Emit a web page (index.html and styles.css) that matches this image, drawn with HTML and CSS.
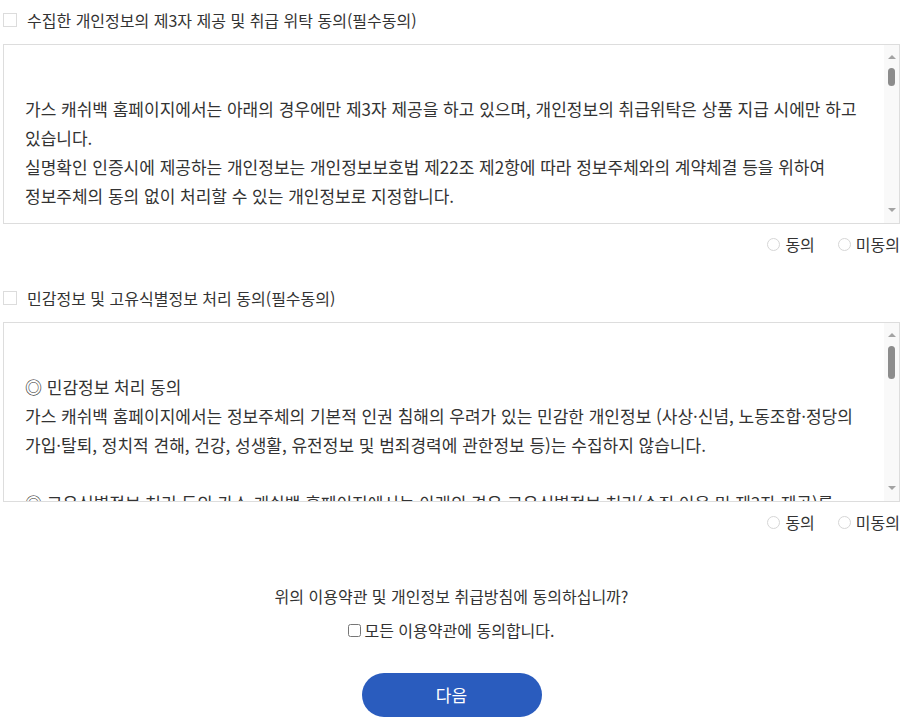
FILE: index.html
```html
<!DOCTYPE html>
<html lang="ko">
<head>
    <meta charset="UTF-8">
    <meta name="viewport" content="width=device-width, initial-scale=1.0">
    <title>약관 동의</title>
    <link rel="stylesheet" href="styles.css">
</head>
<body>
<div class="agree-wrap">

    <div class="agree-section">
        <label class="agree-title">
            <span class="box-check"></span>
            수집한 개인정보의 제3자 제공 및 취급 위탁 동의(필수동의)
        </label>
        <div class="terms-box">
            <div class="terms-text">
                <p>가스 캐쉬백 홈페이지에서는 아래의 경우에만 제3자 제공을 하고 있으며, 개인정보의 취급위탁은 상품 지급 시에만 하고 있습니다.</p>
                <p>실명확인 인증시에 제공하는 개인정보는 개인정보보호법 제22조 제2항에 따라 정보주체와의 계약체결 등을 위하여 정보주체의 동의 없이 처리할 수 있는 개인정보로 지정합니다.</p>
                <p class="gap">◎ 개인정보 제3자 제공</p>
                <p>- 제공받는 자 : 나이스평가정보(주), 서울신용평가정보(주)</p>
                <p>- 제공 목적 : 본인확인 및 실명인증</p>
                <p>- 제공 항목 : 성명, 생년월일, 성별, 휴대폰번호, 통신사</p>
                <p>- 보유 및 이용기간 : 본인확인 완료 후 즉시 파기</p>
                <p class="gap">◎ 개인정보 취급 위탁</p>
                <p>- 수탁업체 : 상품권 발송 대행업체</p>
                <p>- 위탁업무 내용 : 캐쉬백 상품 지급 및 발송</p>
                <p>- 위탁 항목 : 성명, 휴대폰번호, 주소</p>
                <p>- 보유 및 이용기간 : 위탁계약 종료 시까지</p>
                <p class="gap">◎ 동의 거부 권리 및 불이익</p>
                <p>귀하는 개인정보 제3자 제공 및 취급 위탁에 대한 동의를 거부할 권리가 있습니다. 다만, 동의를 거부하실 경우 캐쉬백 신청 및 상품 지급이 제한될 수 있습니다.</p>
                <p class="gap">◎ 기타</p>
                <p>가스 캐쉬백 홈페이지는 위탁계약 체결 시 개인정보보호법 제26조에 따라 위탁업무 수행목적 외 개인정보 처리금지, 기술적·관리적 보호조치, 재위탁 제한, 수탁자에 대한 관리·감독, 손해배상 등 책임에 관한 사항을 계약서 등 문서에 명시하고 있습니다.</p>
                <p>위탁업무의 내용이나 수탁자가 변경될 경우에는 지체 없이 본 개인정보 처리방침을 통하여 공개하도록 하겠습니다.</p>
                <p class="gap">본 동의서는 2023년 1월 1일부터 적용됩니다.</p>
            </div>
            <div class="scrollbar">
                <span class="arrow-up"></span>
                <span class="thumb" style="height: 18px"></span>
                <span class="arrow-down"></span>
            </div>
        </div>
        <div class="agree-radio">
            <label><span class="radio-dot"></span>동의</label>
            <label><span class="radio-dot"></span>미동의</label>
        </div>
    </div>

    <div class="agree-section">
        <label class="agree-title">
            <span class="box-check"></span>
            민감정보 및 고유식별정보 처리 동의(필수동의)
        </label>
        <div class="terms-box">
            <div class="terms-text">
                <p>◎ 민감정보 처리 동의</p>
                <p>가스 캐쉬백 홈페이지에서는 정보주체의 기본적 인권 침해의 우려가 있는 민감한 개인정보 (사상·신념, 노동조합·정당의 가입·탈퇴, 정치적 견해, 건강, 성생활, 유전정보 및 범죄경력에 관한정보 등)는 수집하지 않습니다.</p>
                <p class="gap">◎ 고유식별정보 처리 동의 가스 캐쉬백 홈페이지에서는 아래의 경우 고유식별정보 처리(수집·이용 및 제3자 제공)를 하고 있습니다.</p>
                <p>- 처리 목적 : 본인확인 및 실명인증, 중복 신청 방지</p>
                <p>- 보유 및 이용기간 : 캐쉬백 지급 완료 후 1년</p>
            </div>
            <div class="scrollbar">
                <span class="arrow-up"></span>
                <span class="thumb" style="height: 33px"></span>
                <span class="arrow-down"></span>
            </div>
        </div>
        <div class="agree-radio">
            <label><span class="radio-dot"></span>동의</label>
            <label><span class="radio-dot"></span>미동의</label>
        </div>
    </div>

    <div class="agree-all">
        <p class="agree-question">위의 이용약관 및 개인정보 취급방침에 동의하십니까?</p>
        <label class="agree-all-check"><input type="checkbox" id="agreeAll">모든 이용약관에 동의합니다.</label>
        <button type="button" class="btn-next">다음</button>
    </div>

</div>
</body>
</html>
```

FILE: styles.css
```css
/* 약관 동의 페이지 */
body {
    margin: 0;
    font-family: "Noto Sans CJK KR", "Noto Sans", sans-serif;
    color: #333;
    background-color: #fff;
}
.agree-wrap { width: 897px; padding-left: 3px; }

.agree-section { margin-top: 9px; }
.agree-section + .agree-section { margin-top: 33px; }

.agree-title {
    display: flex;
    align-items: center;
    gap: 10px;
    font-size: 16px;
    line-height: 22px;
    color: #333;
}
.box-check {
    width: 12px;
    height: 12px;
    border: 1px solid #dcdcdc;
    background-color: #fff;
}

/* 약관 스크롤 박스 */
.terms-box {
    display: flex;
    box-sizing: border-box;
    height: 180px;
    margin-top: 13px;
    border: 1px solid #ddd;
}
.terms-text {
    flex: 1;
    overflow: hidden;
    padding: 49px 20px 0 21px;
    font-size: 17px;
    line-height: 29px;
    color: #333;
    word-break: keep-all;
}
.terms-text p { margin: 0; }
.terms-text p.gap { margin-top: 29px; }

.scrollbar {
    display: flex;
    flex-direction: column;
    align-items: center;
    width: 15px;
    padding: 10px 0 11px;
    background-color: #f9f9f9;
}
.arrow-up, .arrow-down {
    width: 0;
    height: 0;
    border-left: 4px solid transparent;
    border-right: 4px solid transparent;
}
.arrow-up { border-bottom: 4px solid #a3a3a3; }
.arrow-down { border-top: 4px solid #a3a3a3; margin-top: auto; }
.thumb {
    width: 7px;
    margin-top: 9px;
    border-radius: 4px;
    background-color: #8c8c8c;
}

.agree-radio {
    display: flex;
    justify-content: flex-end;
    gap: 23px;
    margin-top: 10px;
    font-size: 16px;
    line-height: 20px;
}
.agree-radio label { display: flex; align-items: center; gap: 5px; }
.radio-dot {
    width: 11px;
    height: 11px;
    border: 1px solid #d6d6d6;
    border-radius: 50%;
}

.agree-all { text-align: center; margin-top: 53px; }
.agree-question { margin: 0; font-size: 16px; line-height: 22px; }
.agree-all-check {
    display: inline-flex;
    align-items: center;
    margin-top: 12px;
    font-size: 16px;
    line-height: 22px;
}
.agree-all-check input { margin: 0 3px 0 0; width: 13px; height: 13px; }

.btn-next {
    display: block;
    width: 180px;
    height: 44px;
    margin: 31px auto 0;
    border: none;
    border-radius: 22px;
    background-color: #2a5cbe;
    color: #fff;
    font-family: inherit;
    font-size: 17px;
    cursor: pointer;
}
```
